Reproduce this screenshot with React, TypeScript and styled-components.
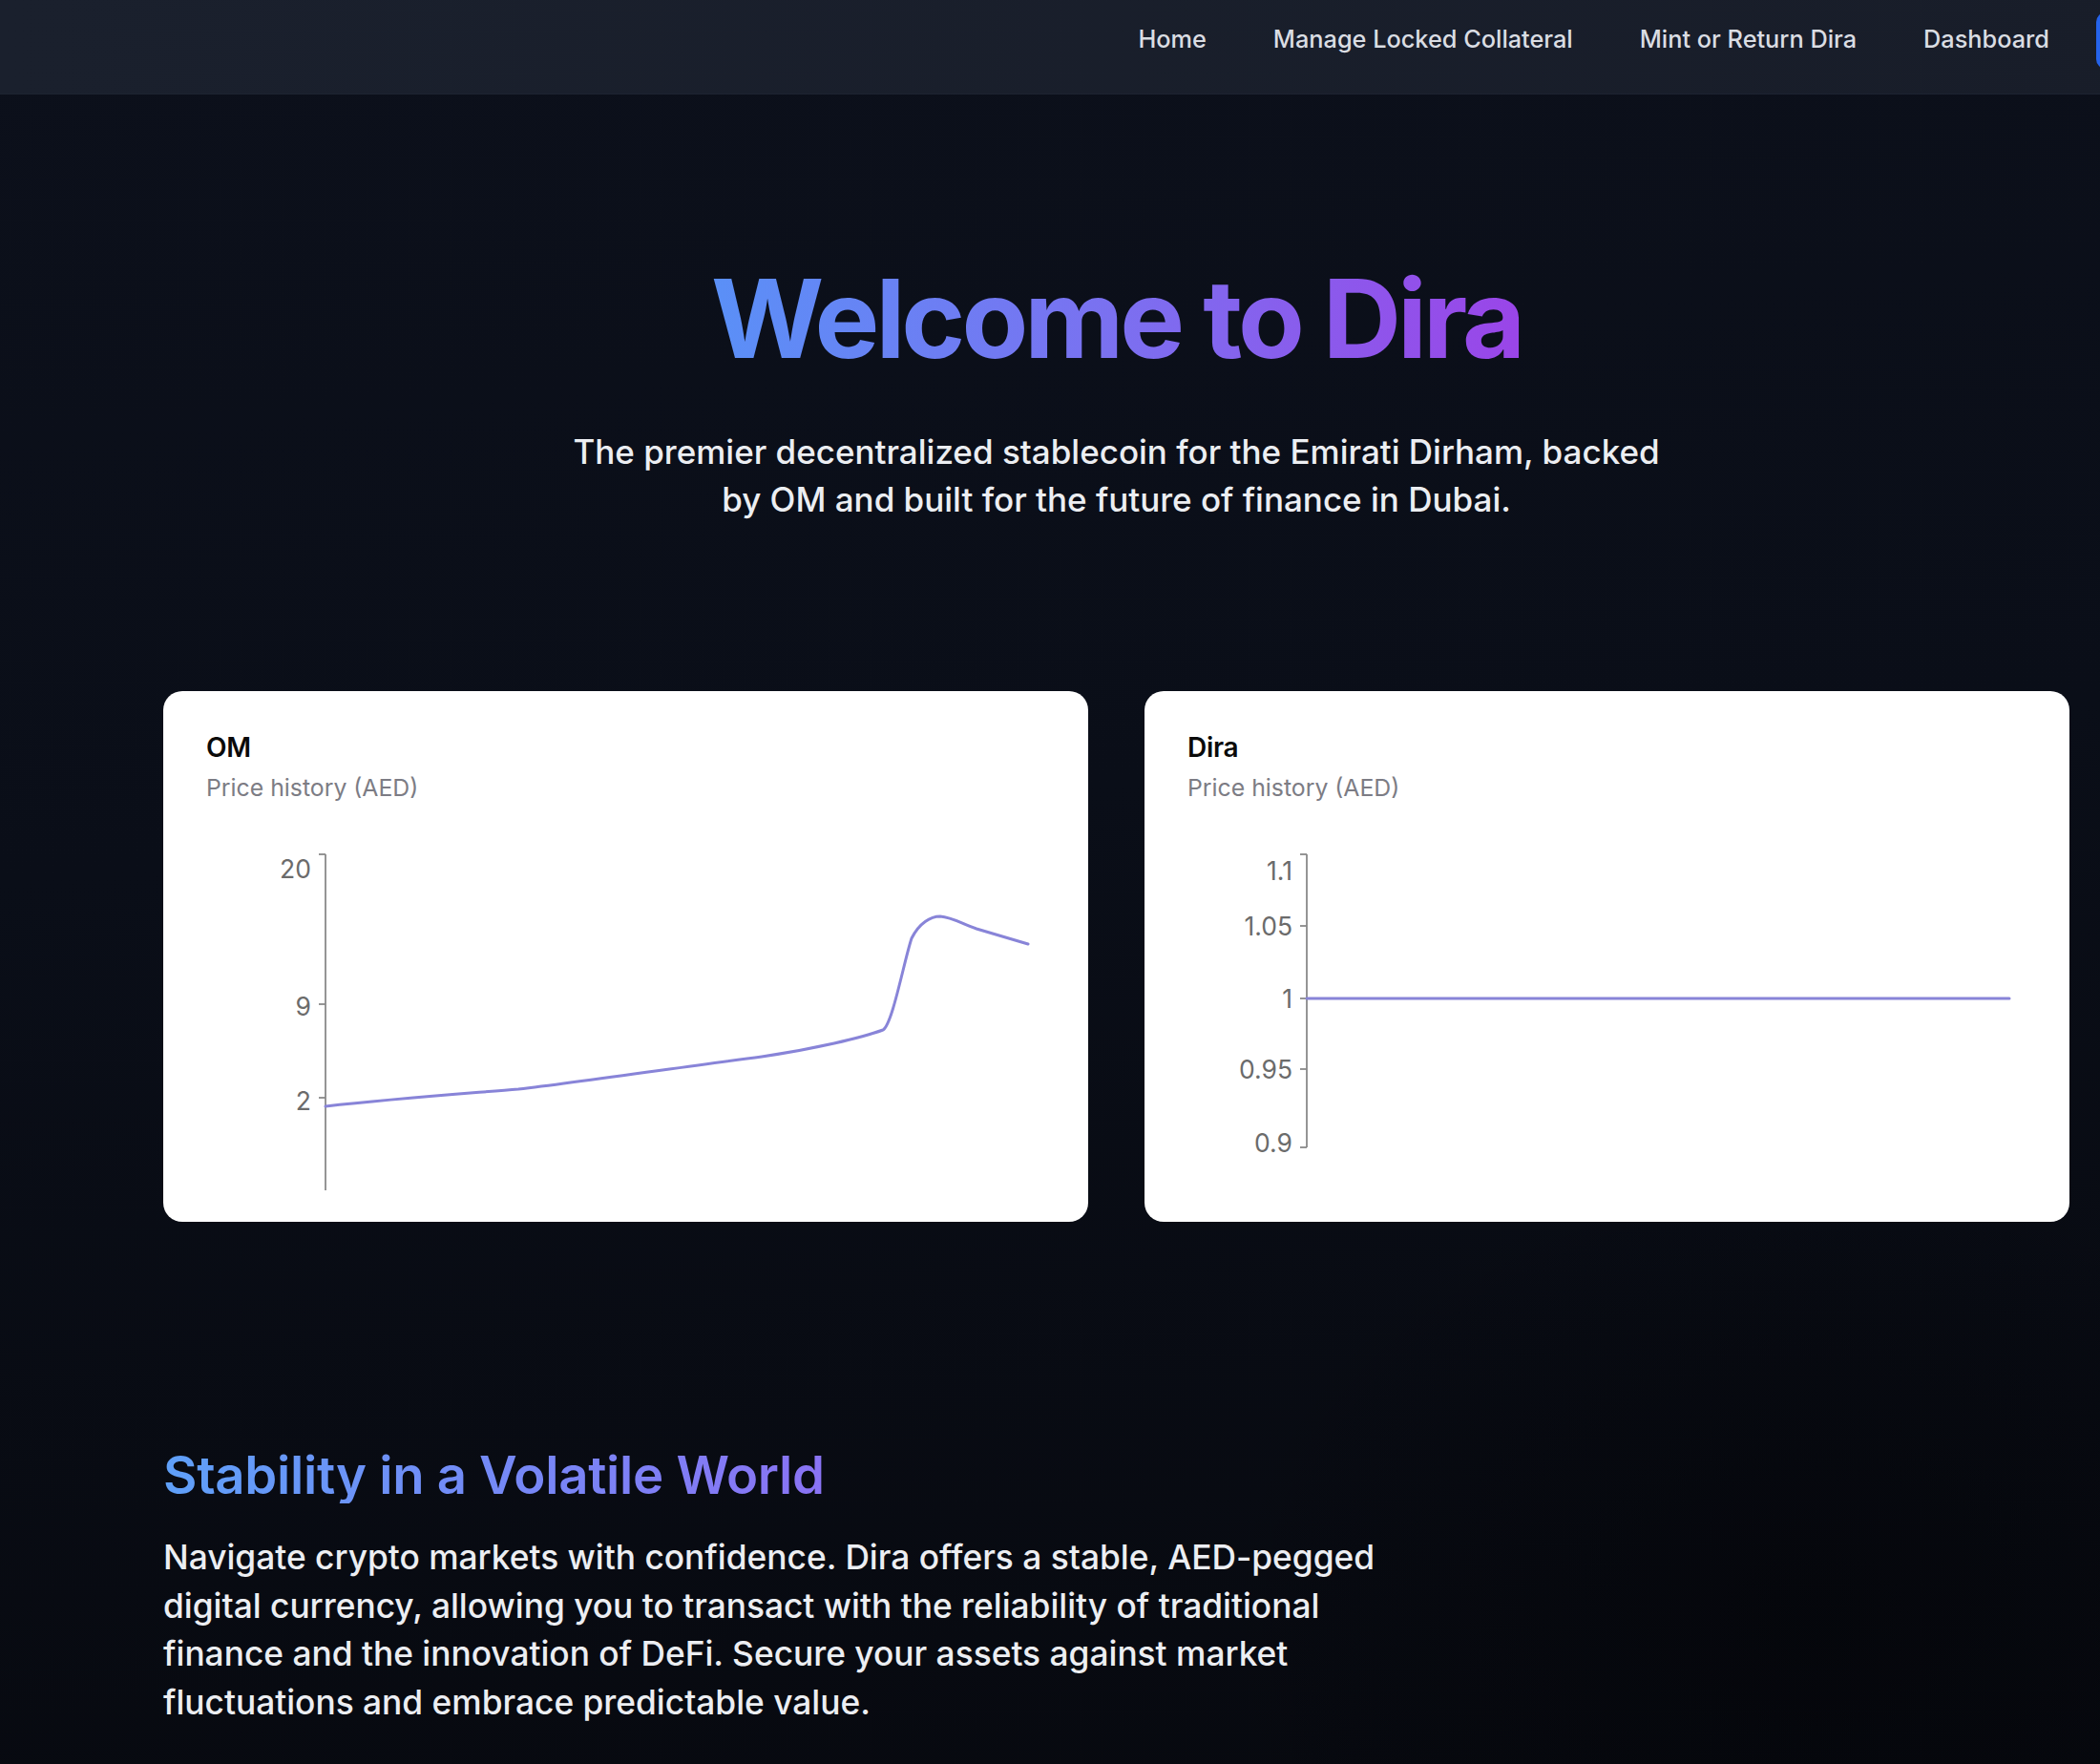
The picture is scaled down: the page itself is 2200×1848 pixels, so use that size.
import React from "react";
import styled, { createGlobalStyle } from "styled-components";

const GlobalStyle = createGlobalStyle`
  html, body {
    margin: 0;
    padding: 0;
    background: #0a0d16;
    overflow: hidden;
  }
  body {
    font-family: Inter, "Noto Sans", "Liberation Sans", sans-serif;
  }
  * { box-sizing: border-box; }
`;

const Page = styled.div`
  width: 2339px;
  min-height: 1848px;
  background:
    radial-gradient(ellipse 900px 700px at 1900px 1700px, rgba(3, 4, 8, 0.6), rgba(3, 4, 8, 0) 70%),
    linear-gradient(175deg, #0c101b 0%, #0a0e18 45%, #07090f 100%);
`;

const NavBar = styled.nav`
  height: 99px;
  display: flex;
  justify-content: flex-end;
  align-items: flex-start;
  padding-top: 13px;
  background: linear-gradient(90deg, #1a202d 0%, #181d29 100%);
  border-bottom: 1px solid #1d2331;
  overflow: hidden;
`;

const NavLinks = styled.div`
  display: flex;
  align-items: center;
  gap: 70px;
  height: 59px;
`;

const NavLink = styled.a`
  font-size: 25.3px;
  font-weight: 500;
  color: #dadde3;
  text-decoration: none;
  line-height: 1;
  margin-top: -4px;
`;

const ConnectButton = styled.button`
  margin-left: 49px;
  margin-right: -60px;
  width: 203px;
  height: 59px;
  border: none;
  border-radius: 10px;
  background: #2563eb;
`;

const Hero = styled.section`
  display: flex;
  flex-direction: column;
  align-items: center;
  padding-top: 169px;
`;

const Title = styled.h1`
  margin: 0;
  font-size: 114px;
  line-height: 132px;
  font-weight: 700;
  letter-spacing: -4px;
  background: linear-gradient(90deg, #5a90f7 0%, #7b70f0 50%, #9a45e8 100%);
  -webkit-background-clip: text;
  background-clip: text;
  color: transparent;
`;

const Subtitle = styled.p`
  margin: 48px 0 0;
  max-width: 1180px;
  text-align: center;
  font-size: 35px;
  line-height: 50px;
  font-weight: 500;
  color: #eceef2;
`;

const ChartsGrid = styled.section`
  display: grid;
  grid-template-columns: 1fr 1fr;
  gap: 59px;
  padding: 0 171px;
  margin-top: 176px;
`;

const Card = styled.div`
  background: #ffffff;
  border-radius: 20px;
  height: 556px;
  padding: 43px 42px 0;
`;

const CardHeader = styled.div`
  padding-left: 3px;
`;

const CardTitle = styled.h3`
  margin: 0;
  font-size: 28px;
  line-height: 33px;
  font-weight: 600;
  color: #0a0a0a;
  letter-spacing: -0.3px;
`;

const CardSubtitle = styled.p`
  margin: 8px 0 0;
  font-size: 24.8px;
  line-height: 34px;
  color: #7c7c84;
`;

const ChartSvg = styled.svg`
  display: block;
  margin-top: 37px;
  overflow: visible;
`;

const TickLabel = styled.text`
  font-family: Inter, "Noto Sans", sans-serif;
  font-size: 26.5px;
  fill: #6b6b6b;
`;

const Info = styled.section`
  padding: 0 171px;
  margin-top: 235px;
`;

const InfoHeading = styled.h2`
  margin: 0;
  font-size: 54.5px;
  line-height: 60px;
  font-weight: 600;
  letter-spacing: -0.3px;
  display: inline-block;
  background: linear-gradient(90deg, #5fa0f9 0%, #8a73f4 100%);
  -webkit-background-clip: text;
  background-clip: text;
  color: transparent;
`;

const InfoText = styled.p`
  margin: 32px 0 0;
  max-width: 1320px;
  font-size: 35.3px;
  line-height: 50.5px;
  font-weight: 500;
  color: #eceef2;
`;

type Tick = { label: string; y: number; labelY?: number };

type ChartProps = {
  ticks: Tick[];
  axisTop: number;
  axisBottom: number;
  path: string;
};

const AXIS_X = 128;

const PriceChart: React.FC<ChartProps> = ({ ticks, axisTop, axisBottom, path }) => (
  <ChartSvg width="884" height="380" viewBox="0 0 884 380">
    <line x1={AXIS_X} y1={axisTop} x2={AXIS_X} y2={axisBottom} stroke="#8a8a8a" strokeWidth="1.8" />
    {ticks.map((t) => (
      <g key={t.label}>
        <line x1={AXIS_X - 7} y1={t.y} x2={AXIS_X} y2={t.y} stroke="#8a8a8a" strokeWidth="1.8" />
        <TickLabel x={AXIS_X - 15} y={t.labelY ?? t.y} textAnchor="end" dominantBaseline="central">
          {t.label}
        </TickLabel>
      </g>
    ))}
    <path d={path} fill="none" stroke="#8884d8" strokeWidth="3" strokeLinejoin="round" strokeLinecap="round" />
  </ChartSvg>
);

const omPath =
  "M128,280 C200,272 270,267 330,262 C400,254 520,236 585,228 C640,220 690,208 712,200 C722,194 734,128 742,104 C750,88 762,81 772,81 C785,82 795,89 810,94 L864,110";

const diraPath = "M128,167 L864,167";

const App: React.FC = () => (
  <>
    <GlobalStyle />
    <Page>
      <NavBar>
        <NavLinks>
          <NavLink href="#">Home</NavLink>
          <NavLink href="#">Manage Locked Collateral</NavLink>
          <NavLink href="#">Mint or Return Dira</NavLink>
          <NavLink href="#">Dashboard</NavLink>
        </NavLinks>
        <ConnectButton aria-label="Connect wallet" />
      </NavBar>

      <Hero>
        <Title>Welcome to Dira</Title>
        <Subtitle>
          The premier decentralized stablecoin for the Emirati Dirham, backed by OM and built for the future of
          finance in Dubai.
        </Subtitle>
      </Hero>

      <ChartsGrid>
        <Card>
          <CardHeader>
            <CardTitle>OM</CardTitle>
            <CardSubtitle>Price history (AED)</CardSubtitle>
          </CardHeader>
          <PriceChart
            axisTop={16}
            axisBottom={368}
            path={omPath}
            ticks={[
              { label: "20", y: 16, labelY: 31 },
              { label: "9", y: 173, labelY: 175 },
              { label: "2", y: 271, labelY: 274 },
            ]}
          />
        </Card>
        <Card>
          <CardHeader>
            <CardTitle>Dira</CardTitle>
            <CardSubtitle>Price history (AED)</CardSubtitle>
          </CardHeader>
          <PriceChart
            axisTop={16}
            axisBottom={323}
            path={diraPath}
            ticks={[
              { label: "1.1", y: 16, labelY: 33 },
              { label: "1.05", y: 91 },
              { label: "1", y: 167 },
              { label: "0.95", y: 241 },
              { label: "0.9", y: 323, labelY: 318 },
            ]}
          />
        </Card>
      </ChartsGrid>

      <Info>
        <InfoHeading>Stability in a Volatile World</InfoHeading>
        <InfoText>
          Navigate crypto markets with confidence. Dira offers a stable, AED-pegged digital currency, allowing you to
          transact with the reliability of traditional finance and the innovation of DeFi. Secure your assets against
          market fluctuations and embrace predictable value.
        </InfoText>
      </Info>
    </Page>
  </>
);

export default App;
